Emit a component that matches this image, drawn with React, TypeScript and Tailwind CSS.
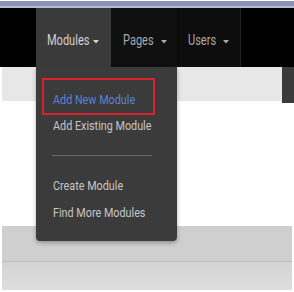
import type { ReactNode } from 'react';

const font = { fontFamily: 'Roboto, "Liberation Sans", sans-serif' };

function Caret({ className }: { className: string }) {
  return (
    <svg width="6" height="4" viewBox="0 0 6 4" className={className}>
      <path d="M0 0 L6 0 L3 3.5 Z" fill="currentColor" />
    </svg>
  );
}

// text in the shot is narrow, so squeeze it a bit
function Narrow({ children, w, scale }: { children: ReactNode; w: string; scale: string }) {
  return (
    <span className={`inline-block ${w} whitespace-nowrap`}>
      <span className={`inline-block origin-left ${scale}`}>{children}</span>
    </span>
  );
}

function NavItem({ label, w, className, textClass }: { label: string; w: string; className: string; textClass: string }) {
  return (
    <div className={`flex h-full items-center pt-[6px] ${className}`}>
      <span className={`text-[14.5px] ${textClass}`}>
        <Narrow w={w} scale="scale-x-[0.76]">{label}</Narrow>
      </span>
      <Caret className={`ml-[4px] mt-[2px] ${textClass}`} />
    </div>
  );
}

function MenuItem({ children, className = '' }: { children: ReactNode; className?: string }) {
  return (
    <div className={`h-[26px] flex items-center pl-[17px] text-[13.5px] ${className}`}>
      <Narrow w="w-[110px]" scale="scale-x-[0.8]">{children}</Narrow>
    </div>
  );
}

export default function App() {
  return (
    <div className="relative w-[294px] h-[292px] overflow-hidden bg-white" style={font}>
      <div className="h-[1px] bg-white" />
      <div className="h-[5px] bg-[#8b92b8]" />
      <div className="h-[2px] bg-[#b9bccd]" />

      <div className="flex h-[59px] bg-black">
        <div className="w-[36px]" />
        <NavItem label="Modules" w="w-[42px]" className="w-[75px] pl-[11px] bg-[#3a3a3a]" textClass="text-[#d2d2d2]" />
        <NavItem label="Pages" w="w-[34px]" className="w-[66px] pl-[12px] bg-[#101010]" textClass="text-[#a9a9a9]" />
        <NavItem label="Users" w="w-[31px]" className="w-[64px] pl-[11px] bg-[#0d0d0d] border-r border-[#222]" textClass="text-[#a9a9a9]" />
        <div className="flex-1" />
      </div>

      <div className="flex h-[36px]">
        <div className="w-[2px] bg-white" />
        <div className="flex-1 h-[34px] bg-[#e7e7e7]" />
        <div className="w-[12px] bg-[#3a3a3a]" />
      </div>

      <div className="h-[123px]" />

      <div className="ml-[2px] mr-[2px]">
        <div className="h-[35px] bg-[#cfcfcf]" />
        <div className="h-[1px] bg-[#bdbdbd]" />
        <div className="h-[28px] bg-gradient-to-b from-[#d3d3d3] to-[#dedede]" />
      </div>

      <div className="absolute left-[36px] top-[67px] w-[141px] h-[174px] bg-[#3b3b3b] rounded-b-[4px] shadow-[0_2px_4px_rgba(0,0,0,0.3)]">
        <div className="pt-[19px]">
          <div className="relative">
            <div className="absolute left-[6px] top-[-8px] w-[113px] h-[37px] border-2 border-[#d9222d]" />
            <MenuItem className="text-[#5683d8]">Add New Module</MenuItem>
          </div>
          <MenuItem className="text-[#c6c6c6]">Add Existing Module</MenuItem>
          <div className="h-[1px] bg-[#6a6a6a] ml-[16px] mr-[25px] mt-[17px] mb-[16px]" />
          <MenuItem className="text-[#c6c6c6]">Create Module</MenuItem>
          <MenuItem className="h-[28px] text-[#c6c6c6]">Find More Modules</MenuItem>
        </div>
      </div>
    </div>
  );
}
